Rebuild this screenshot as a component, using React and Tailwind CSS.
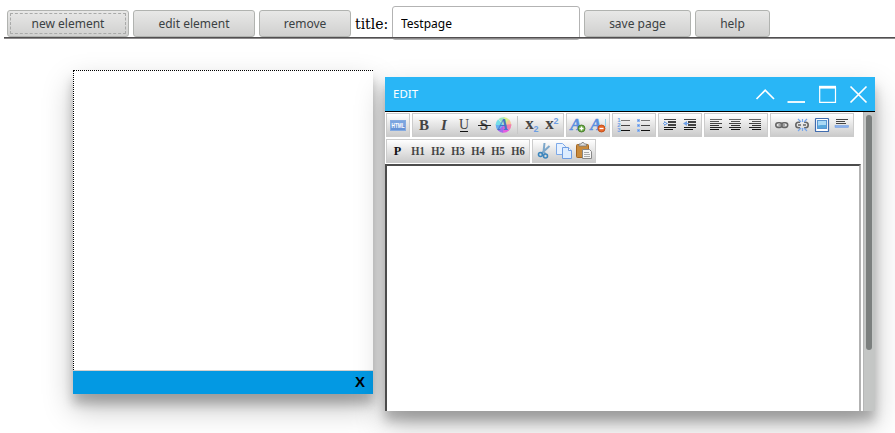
import React from "react";

const BUTTON =
  "h-[27px] shrink-0 rounded-[3px] border border-[#b1b3b0] bg-linear-to-b from-[#e8e8e7] to-[#d0d0cf] font-['Noto_Sans',sans-serif] text-[12px] leading-[25px] text-[#3b4143]";
const SHADOW = "shadow-[0_14px_28px_rgba(0,0,0,0.25),0_10px_10px_rgba(0,0,0,0.22)]";

function Icon({ children }) {
  return (
    <svg viewBox="0 0 20 20" className="block h-5 w-5 shrink-0 overflow-visible">
      {children}
    </svg>
  );
}

function Glyph({ t, size = 14, x = 10, y = 15, italic, bold = true, fill = "#444", w, serif = true }) {
  return (
    <text
      x={x}
      y={y}
      textAnchor="middle"
      fontSize={size}
      fill={fill}
      textLength={w}
      lengthAdjust="spacingAndGlyphs"
      fontWeight={bold ? 700 : 400}
      fontStyle={italic ? "italic" : "normal"}
      fontFamily={serif ? "Liberation Serif, serif" : "Liberation Sans, sans-serif"}
    >
      {t}
    </text>
  );
}

function Lines({ rows }) {
  return rows.map(([x, y, w, h = 1], i) => (
    <rect key={i} x={x} y={y} width={w} height={h} fill={i > 2 ? "#151515" : "#444"} />
  ));
}

function Html() {
  return (
    <Icon>
      <rect x="2.5" y="5.5" width="15" height="10" fill="#7ba5e0" stroke="#86abe0" />
      <rect x="3" y="11" width="14" height="4" fill="#6593d7" />
      <Glyph t="HTML" size={7} y={13} w={13} fill="#fff" serif={false} />
    </Icon>
  );
}

function ColorLetter() {
  return (
    <svg viewBox="0 0 20 20" className="block h-5 w-5 shrink-0">
      <defs>
        <clipPath id="disc"><circle cx="9.5" cy="10" r="7.8" /></clipPath>
      </defs>
      <g clipPath="url(#disc)">
        <path d="M9.5 10L2 1h9z" fill="#9be8c0" />
        <path d="M9.5 10L10 1l9 2z" fill="#d9ee8c" />
        <path d="M9.5 10L18 2v9z" fill="#f6c79b" />
        <path d="M9.5 10L18 9v9z" fill="#f17fb0" />
        <path d="M9.5 10L18 18H8z" fill="#e45ce0" />
        <path d="M9.5 10L9 18H1z" fill="#a06bea" />
        <path d="M9.5 10L1 18V8z" fill="#66b0f2" />
        <path d="M9.5 10L1 10V1z" fill="#72dde8" />
      </g>
      <Glyph t="A" size={16} x={9} italic fill="#4474c8" />
    </svg>
  );
}

function FontBadge({ minus }) {
  return (
    <Icon>
      <text x="8" y="14.500" textAnchor="middle" fontSize="17" fontWeight="700" fontStyle="italic" fontFamily="Liberation Serif, serif" fill="#5c8fdf" stroke="#5c8fdf" strokeWidth=".5">A</text>
      {minus && <path d="M17.5 4v8" stroke="#8ed0ea" />}
      <circle cx="13.5" cy="13.5" r="3.5" fill={minus ? "#e9682b" : "#6cac45"} stroke={minus ? "#b8440e" : "#397020"} strokeWidth=".8" />
      <path d={minus ? "M11.5 13.5h4" : "M11.5 13.5h4M13.5 11.5v4"} stroke="#fff" strokeWidth="1.3" />
    </Icon>
  );
}

function List({ numbered }) {
  return (
    <Icon>
      {[5, 10, 15].map((y, i) => (
        <g key={y}>
          {numbered ? (
            <Glyph t={i + 1} size={6} x={4.8} y={y + 2} fill="#6d9ee3" serif={false} />
          ) : (
            <g><rect x="3" y={y - 1} width="3" height="3" fill="#8db4ef" /><rect x="4" y={y} width="1" height="1" fill="#5b8dde" /></g>
          )}
          <rect x="7" y={y} width="9" height="1" fill={["#777", "#444", "#111"][i]} />
        </g>
      ))}
    </Icon>
  );
}

function Indent({ out }) {
  return (
    <Icon>
      <Lines rows={[[4, 4, 12], [8, 6, 8, 2], [8, 9, 8, 2], [4, 12, 12], [4, 14, 9]]} />
      <path d={out ? "M7 6v5L3 8.5zM6 8h3v1H6z" : "M4 6v5l4-2.500zM3 8h3v1H3z"} fill="#6d9ee3" />
    </Icon>
  );
}

function Align({ mode }) {
  const widths = [12, 9, 12, 9, 12, 9];
  return (
    <Icon>
      {widths.map((w, i) => (
        <rect key={i} x={mode === "left" ? 4 : mode === "right" ? 15 - w : Math.floor(9.5 - w / 2)} y={4 + i * 2} width={w} height="1" fill={["#666", "#555", "#444", "#333", "#222", "#111"][i]} />
      ))}
    </Icon>
  );
}

function Link({ broken }) {
  return (
    <Icon>
      <g fill="none" stroke="#666" strokeWidth="1.6">
        {broken ? (
          <path d="M8 7.300H6.500a2.700 2.700 0 000 5.400H8M12 7.300h1.500a2.700 2.700 0 010 5.400H12M6 10h3M11 10h3" />
        ) : (
          <><rect x="3.800" y="7.800" width="6.200" height="4.600" rx="2.300" /><rect x="9.500" y="7.800" width="6.200" height="4.600" rx="2.300" /><path d="M6.500 10h6.500" stroke="#777" strokeWidth="1.200" /></>
        )}
      </g>
      {broken && <path d="M6 4l3 3M15 4l-3 3M10.500 4v3M6 16l3-3M15 16l-3-3M10.500 13v3" stroke="#75a5ec" strokeWidth="1.200" />}
    </Icon>
  );
}

function Picture() {
  return (
    <Icon>
      <rect x="3.500" y="3.500" width="13" height="13" rx=".6" fill="#fff" stroke="#406cae" strokeWidth="1.200" />
      <rect x="5.500" y="5.500" width="9" height="8" fill="#a9d9f5" stroke="#5a96d0" />
      <path d="M6 10.500l3-.500h5v3H6z" fill="#58a8dc" />
    </Icon>
  );
}

function Rule() {
  return (
    <Icon>
      <Lines rows={[[4, 4, 12], [4, 6, 9], [4, 8, 10]]} />
      <rect x="3" y="10.500" width="13.500" height="2" fill="#8bb1ee" stroke="#6e9ade" strokeWidth=".5" />
    </Icon>
  );
}

function Cut() {
  return (
    <Icon>
      <path d="M10.500 2l-1 9 2 2M15.500 5L9 11l-2 2" stroke="#7da7ca" strokeWidth="2" fill="none" />
      <circle cx="6.500" cy="13.500" r="2" fill="none" stroke="#3c86bd" strokeWidth="1.600" />
      <circle cx="11.500" cy="15" r="2" fill="none" stroke="#3c86bd" strokeWidth="1.600" />
    </Icon>
  );
}

function Copy() {
  return (
    <Icon>
      <path d="M2.500 2.500h6l3 3v8h-9z" fill="#e6f1ff" stroke="#7da9e8" />
      <path d="M8.500 6.500h6l3 3v8h-9z" fill="#dcecff" stroke="#6e9de2" />
      <path d="M14.500 6.500v3h3" fill="#fff" stroke="#6e9de2" />
    </Icon>
  );
}

function Paste() {
  return (
    <Icon>
      <rect x="2.500" y="3.500" width="12" height="13" rx="1" fill="#c88a3c" stroke="#a5651e" />
      <path d="M5 5V3h2l1-1.500h1.500L10.500 3h2v2z" fill="#ddd" stroke="#777" strokeWidth=".8" />
      <path d="M8.500 8.500h7l2 2v7h-9z" fill="#f6f6f6" stroke="#888" />
      <path d="M10 11.500h5M10 13.500h6M10 15.500h6" stroke="#aaa" />
    </Icon>
  );
}

function Group({ children }) {
  return <div className="flex h-6 items-center border border-[#ccc] bg-linear-to-b from-white to-[#cbcbcb] px-px">{children}</div>;
}

function EditWindow() {
  return (
    <section className={"absolute left-[385px] top-[77px] flex h-[334px] w-[490px] flex-col bg-white " + SHADOW}>
      <header className="flex h-[35px] shrink-0 items-center justify-between border-b border-black bg-[#29b6f6] pl-2 pr-[7px]">
        <span className="font-['Noto_Sans',sans-serif] text-[11.5px] leading-4 text-white">EDIT</span>
        <svg viewBox="0 0 113 34" className="h-[34px] w-[113px]" fill="none" stroke="#fff" strokeWidth="1.7">
          <path d="M1.500 22L10.200 13.200L19 22" />
          <path d="M32.500 25H50" strokeWidth="1.800" />
          <path d="M64.700 10v15.300h15.800V10" strokeWidth="1.200" />
          <path d="M64 10.200h17" strokeWidth="2.800" />
          <path d="M95.500 9.500l16 16M111.500 9.500l-16 16" />
        </svg>
      </header>
      <div className="flex min-h-0 flex-1">
        <div className="flex w-[478px] flex-col">
          <div className="flex h-[52px] shrink-0 flex-wrap content-start gap-0.5 pl-px pt-px">
            <Group><Html /></Group>
            <Group>
              <Icon><Glyph t="B" size={15} /></Icon>
              <Icon><Glyph t="I" size={15} italic /></Icon>
              <Icon><Glyph t="U" size={14} y={14} bold={false} /><path d="M6 16.500h8" stroke="#111" /></Icon>
              <Icon><Glyph t="S" size={15} /><path d="M4 10.500h13" stroke="#222" /></Icon>
              <ColorLetter />
              <div className="mx-[3px] h-[18px] w-px bg-[#c8c8c8]" />
              <div className="w-px" />
              <Icon><Glyph t="x" size={17} x={7.500} y={14} /><Glyph t="2" size={9} x={14} y={17} fill="#6d9ee3" serif={false} /></Icon>
              <Icon><Glyph t="x" size={17} x={7.500} y={14} /><Glyph t="2" size={9} x={14} y={9} fill="#6d9ee3" serif={false} /></Icon>
            </Group>
            <Group><FontBadge /><FontBadge minus /></Group>
            <Group><List numbered /><List /></Group>
            <Group><Indent /><Indent out /></Group>
            <Group><Align mode="left" /><Align mode="center" /><Align mode="right" /></Group>
            <Group><Link /><Link broken /><Picture /><Rule /></Group>
            <div className="h-0 w-full -mt-0.5" />
            <div className="-mt-0.5 flex gap-0.5">
              <Group>
                <Icon><Glyph t="P" size={12} x={9.500} y={14} fill="#111" w={7.500} /></Icon>
                {["H1", "H2", "H3", "H4", "H5", "H6"].map((t) => (
                  <Icon key={t}><Glyph t={t} size={12} y={14} w={13.5} fill="#444" /></Icon>
                ))}
              </Group>
              <Group><Cut /><Copy /><Paste /></Group>
            </div>
          </div>
          <div className="mr-0.5 min-h-0 flex-1 border-l-2 border-r-2 border-t-2 border-l-[#4c4c4c] border-r-[#b2b2b2] border-t-[#4c4c4c] bg-white" />
        </div>
        <div className="w-3 border-l border-[#b5b6b6] bg-[#c4c6c5] pl-0.5 pt-[3px]">
          <div className="h-[235px] w-1.5 rounded-full bg-[#7b7f7e]" />
        </div>
      </div>
    </section>
  );
}

export default function App() {
  return (
    <main className="relative h-[433px] w-[895px] overflow-hidden bg-white">
      <nav className="flex h-[39px] items-start gap-1 pl-[7px] pt-1.5">
        <button className={BUTTON + " mt-1 w-[122px] p-0.5"}>
          <span className="flex h-[21px] items-center justify-center rounded-[1px] border border-dashed border-[#a9aaa9]">new element</span>
        </button>
        <button className={BUTTON + " mt-1 w-[122px]"}>edit element</button>
        <button className={BUTTON + " mt-1 w-[92px]"}>remove</button>
        <label className="mt-[5px] flex h-[26px] w-[33px] items-center whitespace-nowrap font-['DejaVu_Serif',serif] text-[14px] text-black">title:</label>
        <input
          defaultValue="Testpage"
          className="h-[34px] w-[188px] rounded-[3px] border border-[#b3b3b3] bg-white px-2 font-['Noto_Sans',sans-serif] text-[12px] text-black outline-none"
        />
        <button className={BUTTON + " mt-1 w-[107px]"}>save page</button>
        <button className={BUTTON + " mt-1 w-[75px]"}>help</button>
      </nav>
      <div className="relative -mt-0.5 ml-1 h-0.5 border-t border-[#514f50] bg-[#8b898a]" />

      <section className={"absolute left-[73px] top-[70px] flex h-[324px] w-[300px] flex-col bg-white " + SHADOW}>
        <div className="flex-1 border-l border-t border-dotted border-black" />
        <div className="flex h-6 items-center justify-end border-t border-[#d2d0ce] bg-[#0399e3] pb-[2px] pr-2">
          <span className="font-['Liberation_Sans',sans-serif] text-[15px] font-bold leading-none text-black">X</span>
        </div>
      </section>

      <EditWindow />
    </main>
  );
}
